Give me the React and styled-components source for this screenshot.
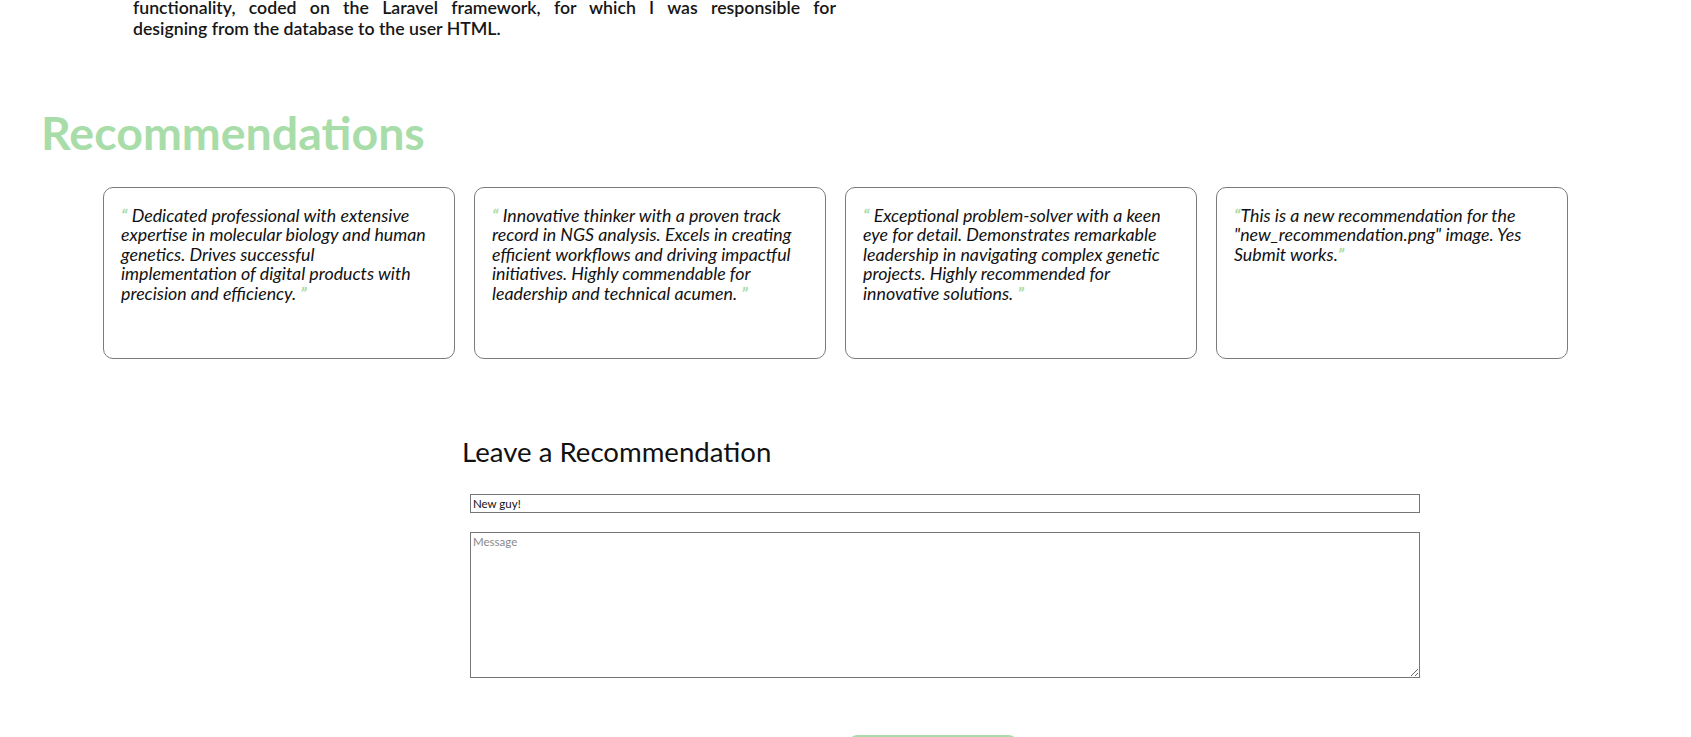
import React from "react";
import styled, { createGlobalStyle } from "styled-components";

const GlobalStyle = createGlobalStyle`
  html, body { margin: 0; padding: 0; overflow: hidden; background: #fff; }
  body { font-family: "Lato", "Open Sans", sans-serif; color: #111; }
`;

const Page = styled.main`
  display: flex;
  flex-direction: column;
`;

const Intro = styled.p`
  margin: -3px 0 0 133px;
  width: 703px;
  font-size: 17.7px;
  font-weight: 600;
  line-height: 21px;
  color: #161616;
`;

const JustifiedLine = styled.span`
  display: block;
  text-align: justify;
  text-align-last: justify;
`;

const PlainLine = styled.span`
  display: block;
`;

const SectionTitle = styled.h1`
  margin: 66px 0 0 41px;
  font-size: 46.5px;
  font-weight: 700;
  line-height: 55px;
  color: #a8dda9;
`;

const CardRow = styled.div`
  display: grid;
  grid-template-columns: repeat(4, 352px);
  gap: 19px;
  margin: 27px 0 0 103px;
`;

const Card = styled.blockquote`
  margin: 0;
  box-sizing: border-box;
  height: 172px;
  padding: 18px 24px 17px 17px;
  border: 1px solid #7b7b7b;
  border-radius: 10px;
  font-size: 17.8px;
  font-style: italic;
  line-height: 19.4px;
  color: #111;
`;

const Mark = styled.span`
  color: #a8dda9;
  font-weight: 700;
`;

const FormSection = styled.section`
  display: flex;
  flex-direction: column;
  margin: 76px 0 0 462px;
`;

const FormTitle = styled.h2`
  margin: 0;
  font-size: 27.6px;
  font-weight: 400;
  line-height: 33px;
  color: #111;
`;

const Form = styled.form`
  display: flex;
  flex-direction: column;
  align-items: flex-start;
  width: 950px;
  margin: 26px 0 0 8px;
`;

const TextInput = styled.input`
  box-sizing: border-box;
  width: 950px;
  height: 19px;
  margin: 0;
  padding: 1px 2px;
  border: 1px solid #767676;
  border-radius: 0;
  font-family: "Lato", sans-serif;
  font-size: 11.5px;
  color: #111;
  outline: none;
`;

const MessageArea = styled.textarea`
  box-sizing: border-box;
  width: 950px;
  height: 146px;
  margin: 19px 0 0 0;
  padding: 2px;
  border: 1px solid #767676;
  border-radius: 0;
  font-family: "Lato", sans-serif;
  font-size: 11.5px;
  color: #111;
  outline: none;
  &::placeholder { color: #8a8a8a; }
`;

const SubmitButton = styled.button`
  box-sizing: border-box;
  width: 170px;
  height: 42px;
  margin: 57px 0 0 378px;
  border: 2px solid #a8dda9;
  border-radius: 9px;
  background: #fff;
  font-family: "Lato", sans-serif;
  font-size: 16px;
  color: #111;
`;

const recommendations = [
  { text: "Dedicated professional with extensive expertise in molecular biology and human genetics. Drives successful implementation of digital products with precision and efficiency.", spaced: true },
  { text: "Innovative thinker with a proven track record in NGS analysis. Excels in creating efficient workflows and driving impactful initiatives. Highly commendable for leadership and technical acumen.", spaced: true },
  { text: "Exceptional problem-solver with a keen eye for detail. Demonstrates remarkable leadership in navigating complex genetic projects. Highly recommended for innovative solutions.", spaced: true },
  { text: "This is a new recommendation for the \"new_recommendation.png\" image. Yes Submit works.", spaced: false },
];

export default function App() {
  return (
    <>
      <GlobalStyle />
      <Page>
        <Intro>
          <JustifiedLine>functionality, coded on the Laravel framework, for which I was responsible for</JustifiedLine>
          <PlainLine>designing from the database to the user HTML.</PlainLine>
        </Intro>

        <SectionTitle>Recommendations</SectionTitle>

        <CardRow>
          {recommendations.map((r, i) => (
            <Card key={i}>
              <Mark>“</Mark>
              {r.spaced ? " " : ""}
              {r.text}
              {r.spaced ? " " : ""}
              <Mark>”</Mark>
            </Card>
          ))}
        </CardRow>

        <FormSection>
          <FormTitle>Leave a Recommendation</FormTitle>
          <Form onSubmit={(e) => e.preventDefault()}>
            <TextInput type="text" defaultValue="New guy!" />
            <MessageArea placeholder="Message" />
            <SubmitButton type="submit">Submit</SubmitButton>
          </Form>
        </FormSection>
      </Page>
    </>
  );
}
